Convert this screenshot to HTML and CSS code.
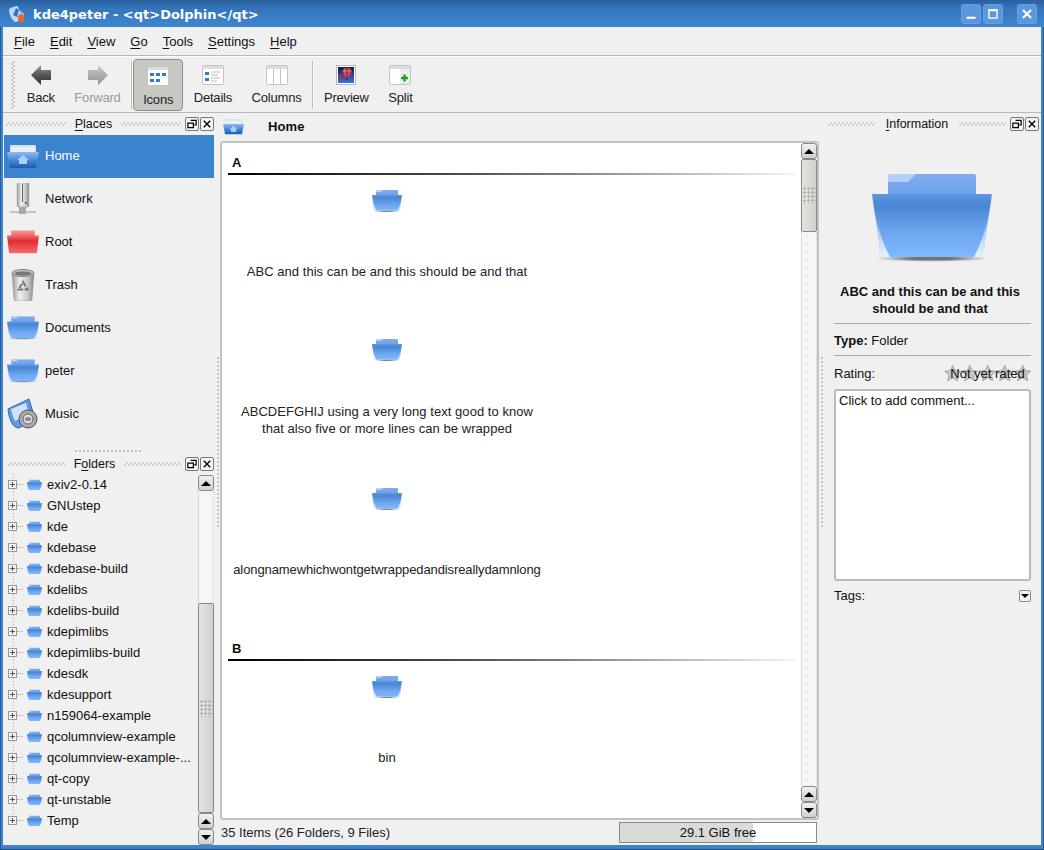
FILE: index.html
```html
<!DOCTYPE html>
<html lang="en">
<head>
<meta charset="utf-8">
<title>kde4peter - Dolphin</title>
<link rel="stylesheet" href="styles.css">
</head>
<body>
<svg class="defs" aria-hidden="true">
  <defs>
    <linearGradient id="fBack" x1="0" y1="0" x2="0" y2="1"><stop offset="0" stop-color="#7fadf0"/><stop offset="1" stop-color="#6a9fe8"/></linearGradient>
    <linearGradient id="fFront" x1="0" y1="0" x2="0" y2="1"><stop offset="0" stop-color="#5f97e0"/><stop offset=".18" stop-color="#4a86d4"/><stop offset=".6" stop-color="#6ca6f0"/><stop offset="1" stop-color="#82b8fc"/></linearGradient>
    <linearGradient id="fGlow" x1="0" y1="0" x2="0" y2="1"><stop offset=".15" stop-color="#fff" stop-opacity="0"/><stop offset="1" stop-color="#fff" stop-opacity=".8"/></linearGradient>
    <radialGradient id="fShadow"><stop offset=".4" stop-color="#555" stop-opacity=".8"/><stop offset="1" stop-color="#888" stop-opacity="0"/></radialGradient>
    <linearGradient id="fRed" x1="0" y1="0" x2="0" y2="1"><stop offset="0" stop-color="#ee6a6e"/><stop offset=".3" stop-color="#e02c30"/><stop offset="1" stop-color="#f86a6c"/></linearGradient>
    <linearGradient id="fRedB" x1="0" y1="0" x2="0" y2="1"><stop offset="0" stop-color="#f79a9a"/><stop offset="1" stop-color="#ee5a5e"/></linearGradient>
    <linearGradient id="fHome" x1="0" y1="0" x2="0" y2="1"><stop offset="0" stop-color="#8fbcf4"/><stop offset=".5" stop-color="#4688d8"/><stop offset="1" stop-color="#1a5cb0"/></linearGradient>
    <linearGradient id="aDark" x1="0" y1="0" x2="0" y2="1"><stop offset="0" stop-color="#999"/><stop offset=".5" stop-color="#555"/><stop offset="1" stop-color="#333"/></linearGradient>
    <linearGradient id="aLight" x1="0" y1="0" x2="0" y2="1"><stop offset="0" stop-color="#ccc"/><stop offset="1" stop-color="#8f8f8f"/></linearGradient>
    <linearGradient id="metal" x1="0" y1="0" x2="1" y2="0"><stop offset="0" stop-color="#999"/><stop offset=".35" stop-color="#eee"/><stop offset=".7" stop-color="#ccc"/><stop offset="1" stop-color="#888"/></linearGradient>
    <linearGradient id="pic" x1="0" y1="0" x2="0" y2="1"><stop offset="0" stop-color="#15154a"/><stop offset="1" stop-color="#3a78d8"/></linearGradient>
    <symbol id="folder" viewBox="0 0 120 88">
      <ellipse cx="60" cy="84.500" rx="58" ry="3.500" fill="url(#fShadow)"/>
      <path d="M16 2a2 2 0 0 1 2-2h84a2 2 0 0 1 2 2v24H16z" fill="url(#fBack)"/>
      <path d="M16 8V2a2 2 0 0 1 2-2h26l-8 8z" fill="#b5d0f8"/>
      <path d="M0 20H120C116 50 112 68 112 83H8C8 68 4 50 0 20Z" fill="url(#fFront)"/>
      <path d="M0 20C4 50 8 68 8 83H18C10 68 3 46 0 20Z" fill="url(#fGlow)"/>
      <path d="M120 20C116 50 112 68 112 83H102C110 68 117 46 120 20Z" fill="url(#fGlow)"/>
    </symbol>
    <symbol id="folder-red" viewBox="0 0 120 88">
      <path d="M16 2a2 2 0 0 1 2-2h84a2 2 0 0 1 2 2v24H16z" fill="url(#fRedB)"/>
      <path d="M0 20H120L112 86H8Z" fill="url(#fRed)"/>
    </symbol>
    <symbol id="tb-frame" viewBox="0 0 22 20">
      <rect x=".5" y=".5" width="21" height="19" rx="1" fill="#fff" stroke="#c4c4c4"/>
      <rect x="1" y="1" width="20" height="3" fill="#ddd"/>
    </symbol>
    <symbol id="star" viewBox="0 0 18 18">
      <path d="M9 1l2.500 5.400 5.800.7-4.300 4 1.200 5.900L9 14.100 3.800 17l1.200-5.900-4.300-4 5.800-.7z" fill="#c6c6c6" stroke="#999" stroke-width=".8"/>
    </symbol>
    <symbol id="ic-float" viewBox="0 0 13 13">
      <path d="M5 2.500h6v5H9M2 5.500h6v5H2zM2 5.500h6" fill="none" stroke="#000" stroke-width="1.300"/>
    </symbol>
    <symbol id="ic-close" viewBox="0 0 13 13">
      <path d="M3 3l7 7M10 3l-7 7" fill="none" stroke="#000" stroke-width="1.500"/>
    </symbol>
  </defs>
</svg>

<div class="window">
  <header class="titlebar">
    <svg class="app-icon" viewBox="0 0 18 18"><path d="M1 4c3-2 6-3 9-3l1 4 5 4-3 7-6 1C3 14 1 9 1 4z" fill="#bcd8f8"/><path d="M8 3l3 2-2 7-4-2z" fill="#2f6fc8"/><path d="M9 12l4-4 4 4h-1v5h-6v-5z" fill="#e06a30"/></svg>
    <span class="title-text">kde4peter - &lt;qt&gt;Dolphin&lt;/qt&gt;</span>
    <div class="win-buttons">
      <button class="win-btn"><svg viewBox="0 0 20 20"><rect x="5" y="13" width="10" height="2.400" fill="#fff"/></svg></button>
      <button class="win-btn"><svg viewBox="0 0 20 20"><rect x="5.500" y="5.500" width="9" height="9" fill="none" stroke="#fff" stroke-width="1.500"/><rect x="5" y="5" width="10" height="2" fill="#fff"/></svg></button>
      <button class="win-btn win-close"><svg viewBox="0 0 20 20"><path d="M5.500 5.500l9 9M14.500 5.500l-9 9" stroke="#fff" stroke-width="2.400"/></svg></button>
    </div>
  </header>

  <nav class="menubar">
    <span><u>F</u>ile</span><span><u>E</u>dit</span><span><u>V</u>iew</span><span><u>G</u>o</span><span><u>T</u>ools</span><span><u>S</u>ettings</span><span><u>H</u>elp</span>
  </nav>

  <div class="toolbar">
    <div class="tb-handle"></div>
    <div class="tb-btn"><svg class="tb-icon" viewBox="0 0 20 20"><path d="M0 10L10 0V5H20V15H10V20Z" fill="url(#aDark)"/></svg><span>Back</span></div>
    <div class="tb-btn tb-disabled"><svg class="tb-icon" viewBox="0 0 20 20"><path d="M20 10L10 0V5H0V15H10V20Z" fill="url(#aLight)"/></svg><span>Forward</span></div>
    <div class="tb-sep"></div>
    <div class="tb-btn tb-active">
      <svg class="tb-icon tb-wide" viewBox="0 0 22 20"><use href="#tb-frame"/><g fill="#2e7bd6"><rect x="3" y="7" width="4" height="3"/><rect x="9" y="7" width="4" height="3"/><rect x="15" y="7" width="4" height="3"/><rect x="3" y="13" width="4" height="3"/><rect x="9" y="13" width="4" height="3"/></g></svg>
      <span>Icons</span>
    </div>
    <div class="tb-btn">
      <svg class="tb-icon tb-wide" viewBox="0 0 22 20"><use href="#tb-frame"/><g fill="#2e7bd6"><rect x="3" y="7" width="4" height="3"/><rect x="3" y="13" width="4" height="3"/></g><path d="M9 7h9M9 10h7M9 13h9M9 16h6" stroke="#bbb"/></svg>
      <span>Details</span>
    </div>
    <div class="tb-btn">
      <svg class="tb-icon tb-wide" viewBox="0 0 22 20"><use href="#tb-frame"/><path d="M7.500 4v15M14.500 4v15" stroke="#c4c4c4"/></svg>
      <span>Columns</span>
    </div>
    <div class="tb-sep"></div>
    <div class="tb-btn">
      <svg class="tb-icon" viewBox="0 0 20 20"><rect x=".5" y=".5" width="19" height="19" fill="#fff" stroke="#bbb"/><rect x="2" y="2" width="16" height="16" fill="url(#pic)"/><circle cx="11" cy="7.500" r="5" fill="#a02868"/><path d="M6.500 6h9M8.500 3.500l1 8M13.500 3.500l-1 8" stroke="#d8a030" stroke-width=".8"/><path d="M3 11l3-3-1 7z" fill="#d02828"/><path d="M10 13h2v2h-2z" fill="#6a3018"/></svg>
      <span>Preview</span>
    </div>
    <div class="tb-btn">
      <svg class="tb-icon tb-wide" viewBox="0 0 22 20"><use href="#tb-frame"/><rect x="11" y="4" width="10" height="15" fill="#e8e8e8"/><path d="M11 8l4-4M11 13l9-9M11 18l10-10M16 18l5-5" stroke="#fff"/><path d="M12 13h7M15.500 9.500v7" stroke="#22a020" stroke-width="2.400"/></svg>
      <span>Split</span>
    </div>
  </div>

  <main class="workspace">
    <aside class="left-dock">
      <div class="dock-head">
        <i class="dots"></i><span class="dock-title"><u>P</u>laces</span><i class="dots"></i>
        <button class="dock-btn"><svg viewBox="0 0 13 13"><use href="#ic-float"/></svg></button><button class="dock-btn"><svg viewBox="0 0 13 13"><use href="#ic-close"/></svg></button>
      </div>
      <ul class="places">
        <li class="place place-on">
          <svg class="place-icon" viewBox="0 0 32 26"><path d="M3 3a1 1 0 0 1 1-1h24a1 1 0 0 1 1 1v8H3z" fill="#cfe0f6"/><rect x="4" y="4" width="24" height="6" fill="#eee"/><path d="M0 9H32L29 25H3Z" fill="url(#fHome)"/><path d="M16 12l6 5h-2v4h-8v-4h-2z" fill="#a9d0f8"/></svg>
          <span>Home</span>
        </li>
        <li class="place">
          <svg class="place-icon" viewBox="0 0 26 32"><rect x="7" y="0" width="12" height="24" rx="1" fill="url(#metal)" stroke="#aaa" stroke-width=".5"/><path d="M12.500 1v18" stroke="#444" stroke-width=".8"/><rect x="15" y="19" width="1.500" height="1.500" fill="#222"/><path d="M0 29h26" stroke="#b4b4b4" stroke-width="1.500"/><rect x="9" y="24" width="7" height="7" fill="#a8a8a8"/></svg>
          <span>Network</span>
        </li>
        <li class="place">
          <svg class="place-icon" viewBox="0 0 30 22"><use href="#folder-red" width="30" height="22"/></svg>
          <span>Root</span>
        </li>
        <li class="place">
          <svg class="place-icon" viewBox="0 0 24 32"><path d="M1 4h22l-2 26a3 2 0 0 1-3 2H6a3 2 0 0 1-3-2Z" fill="url(#metal)" stroke="#888" stroke-width=".5"/><ellipse cx="12" cy="4" rx="11" ry="3.500" fill="#bbb" stroke="#888"/><ellipse cx="12" cy="4.500" rx="8.500" ry="2" fill="#777"/><path d="M12 13l4.500 7.500h-9z" fill="none" stroke="#777" stroke-width="2" stroke-dasharray="5 1.500"/></svg>
          <span>Trash</span>
        </li>
        <li class="place">
          <svg class="place-icon" viewBox="0 0 30 22"><use href="#folder" width="30" height="22"/></svg>
          <span>Documents</span>
        </li>
        <li class="place">
          <svg class="place-icon" viewBox="0 0 30 22"><use href="#folder" width="30" height="22"/></svg>
          <span>peter</span>
        </li>
        <li class="place">
          <svg class="place-icon" viewBox="0 0 32 32"><path d="M1 11L22 1l6 20-16 9C6 30 2 22 1 11Z" fill="#5c9be8" stroke="#2a64b8"/><path d="M4 11l15-6 3 11-14 7C6 19 5 15 4 11Z" fill="#cfe2fa"/><circle cx="21" cy="21" r="9" fill="#aaa" stroke="#555"/><circle cx="21" cy="21" r="5" fill="#ddd" stroke="#666"/><ellipse cx="21" cy="21" rx="3" ry="2" fill="#888"/></svg>
          <span>Music</span>
        </li>
      </ul>
      <div class="dock-split"><i class="split-dots"></i></div>
      <div class="dock-head dock-head-folders">
        <i class="dots"></i><span class="dock-title">F<u>o</u>lders</span><i class="dots"></i>
        <button class="dock-btn"><svg viewBox="0 0 13 13"><use href="#ic-float"/></svg></button><button class="dock-btn"><svg viewBox="0 0 13 13"><use href="#ic-close"/></svg></button>
      </div>
      <div class="tree-wrap">
        <ul class="tree">
          <li><i class="exp"></i><i class="conn"></i><svg class="tree-folder" viewBox="0 0 30 22"><use href="#folder" width="30" height="22"/></svg><span>exiv2-0.14</span></li>
          <li><i class="exp"></i><i class="conn"></i><svg class="tree-folder" viewBox="0 0 30 22"><use href="#folder" width="30" height="22"/></svg><span>GNUstep</span></li>
          <li><i class="exp"></i><i class="conn"></i><svg class="tree-folder" viewBox="0 0 30 22"><use href="#folder" width="30" height="22"/></svg><span>kde</span></li>
          <li><i class="exp"></i><i class="conn"></i><svg class="tree-folder" viewBox="0 0 30 22"><use href="#folder" width="30" height="22"/></svg><span>kdebase</span></li>
          <li><i class="exp"></i><i class="conn"></i><svg class="tree-folder" viewBox="0 0 30 22"><use href="#folder" width="30" height="22"/></svg><span>kdebase-build</span></li>
          <li><i class="exp"></i><i class="conn"></i><svg class="tree-folder" viewBox="0 0 30 22"><use href="#folder" width="30" height="22"/></svg><span>kdelibs</span></li>
          <li><i class="exp"></i><i class="conn"></i><svg class="tree-folder" viewBox="0 0 30 22"><use href="#folder" width="30" height="22"/></svg><span>kdelibs-build</span></li>
          <li><i class="exp"></i><i class="conn"></i><svg class="tree-folder" viewBox="0 0 30 22"><use href="#folder" width="30" height="22"/></svg><span>kdepimlibs</span></li>
          <li><i class="exp"></i><i class="conn"></i><svg class="tree-folder" viewBox="0 0 30 22"><use href="#folder" width="30" height="22"/></svg><span>kdepimlibs-build</span></li>
          <li><i class="exp"></i><i class="conn"></i><svg class="tree-folder" viewBox="0 0 30 22"><use href="#folder" width="30" height="22"/></svg><span>kdesdk</span></li>
          <li><i class="exp"></i><i class="conn"></i><svg class="tree-folder" viewBox="0 0 30 22"><use href="#folder" width="30" height="22"/></svg><span>kdesupport</span></li>
          <li><i class="exp"></i><i class="conn"></i><svg class="tree-folder" viewBox="0 0 30 22"><use href="#folder" width="30" height="22"/></svg><span>n159064-example</span></li>
          <li><i class="exp"></i><i class="conn"></i><svg class="tree-folder" viewBox="0 0 30 22"><use href="#folder" width="30" height="22"/></svg><span>qcolumnview-example</span></li>
          <li><i class="exp"></i><i class="conn"></i><svg class="tree-folder" viewBox="0 0 30 22"><use href="#folder" width="30" height="22"/></svg><span>qcolumnview-example-...</span></li>
          <li><i class="exp"></i><i class="conn"></i><svg class="tree-folder" viewBox="0 0 30 22"><use href="#folder" width="30" height="22"/></svg><span>qt-copy</span></li>
          <li><i class="exp"></i><i class="conn"></i><svg class="tree-folder" viewBox="0 0 30 22"><use href="#folder" width="30" height="22"/></svg><span>qt-unstable</span></li>
          <li><i class="exp"></i><i class="conn"></i><svg class="tree-folder" viewBox="0 0 30 22"><use href="#folder" width="30" height="22"/></svg><span>Temp</span></li>
        </ul>
        <div class="scrollbar tree-scroll">
          <div class="sb-btn"><i class="tri-up"></i></div>
          <div class="sb-track sb-track-tree"></div>
          <div class="sb-thumb sb-thumb-tree"><i class="grip"></i></div>
          <div class="sb-btn sb-btn-small"><i class="tri-up"></i></div>
          <div class="sb-btn sb-btn-small"><i class="tri-down"></i></div>
        </div>
      </div>
    </aside>

    <div class="v-split"><i class="v-dots"></i></div>

    <section class="center">
      <div class="location">
        <svg class="loc-icon" viewBox="0 0 32 26"><path d="M3 3a1 1 0 0 1 1-1h24a1 1 0 0 1 1 1v8H3z" fill="#cfe0f6"/><rect x="4" y="4" width="24" height="6" fill="#eee"/><path d="M0 9H32L29 25H3Z" fill="url(#fHome)"/><path d="M16 12l6 5h-2v4h-8v-4h-2z" fill="#a9d0f8"/></svg>
        <strong>Home</strong>
      </div>
      <div class="view">
        <div class="files">
          <h2 class="cat">A</h2>
          <div class="item"><svg class="item-icon" viewBox="0 0 30 22"><use href="#folder" width="30" height="22"/></svg><div class="item-label">ABC and this can be and this should be and that</div></div>
          <div class="item"><svg class="item-icon" viewBox="0 0 30 22"><use href="#folder" width="30" height="22"/></svg><div class="item-label">ABCDEFGHIJ using a very long text good to know<br>that also five or more lines can be wrapped</div></div>
          <div class="item"><svg class="item-icon" viewBox="0 0 30 22"><use href="#folder" width="30" height="22"/></svg><div class="item-label item-label-long">alongnamewhichwontgetwrappedandisreallydamnlong</div></div>
          <h2 class="cat cat-next">B</h2>
          <div class="item"><svg class="item-icon" viewBox="0 0 30 22"><use href="#folder" width="30" height="22"/></svg><div class="item-label">bin</div></div>
        </div>
        <div class="scrollbar view-scroll">
          <div class="sb-btn"><i class="tri-up"></i></div>
          <div class="sb-thumb sb-thumb-view"><i class="grip"></i></div>
          <div class="sb-track"></div>
          <div class="sb-btn"><i class="tri-up"></i></div>
          <div class="sb-btn"><i class="tri-down"></i></div>
        </div>
      </div>
      <footer class="status">
        <span class="status-text">35 Items (26 Folders, 9 Files)</span>
        <div class="capacity"><div class="capacity-fill" style="width:68%"></div><span>29.1 GiB free</span></div>
      </footer>
    </section>

    <div class="v-split v-split-right"><i class="v-dots"></i></div>

    <aside class="right-dock">
      <div class="dock-head dock-head-info">
        <i class="dots"></i><span class="dock-title"><u>I</u>nformation</span><i class="dots"></i>
        <button class="dock-btn"><svg viewBox="0 0 13 13"><use href="#ic-float"/></svg></button><button class="dock-btn"><svg viewBox="0 0 13 13"><use href="#ic-close"/></svg></button>
      </div>
      <div class="info">
        <svg class="info-folder" viewBox="0 0 120 88"><use href="#folder" width="120" height="88"/></svg>
        <div class="info-name">ABC and this can be and this<br>should be and that</div>
        <div class="info-type"><b>Type:</b> Folder</div>
        <div class="info-rating">
          <span>Rating:</span>
          <div class="rating-box">
            <div class="stars"><svg viewBox="0 0 18 18"><use href="#star"/></svg><svg viewBox="0 0 18 18"><use href="#star"/></svg><svg viewBox="0 0 18 18"><use href="#star"/></svg><svg viewBox="0 0 18 18"><use href="#star"/></svg><svg viewBox="0 0 18 18"><use href="#star"/></svg></div>
            <span class="rating-text">Not yet rated</span>
          </div>
        </div>
        <div class="comment">Click to add comment...</div>
        <div class="tags"><span>Tags:</span><button class="tags-btn"><i class="tri-down tri-small"></i></button></div>
      </div>
    </aside>
  </main>
</div>
</body>
</html>
```

FILE: styles.css
```css
* { box-sizing: border-box; }
html, body { margin: 0; padding: 0; }
body { width: 1044px; height: 850px; overflow: hidden; background: #2a6aa8; font: 13px/17px "Liberation Sans", Arial, sans-serif; color: #111; }
ul { list-style: none; margin: 0; padding: 0; }
u { text-underline-offset: 2px; text-decoration-thickness: 1px; }
i { display: block; font-style: normal; }
button { padding: 0; font: inherit; }
.defs { display: block; width: 0; height: 0; overflow: hidden; }

.window { width: 1044px; height: 850px; display: flex; flex-direction: column; padding: 0 3px 4px; background: #3c84d0; border-bottom: 1px solid #1c4a78; box-shadow: inset 1px 0 #2a5c94, inset -1px 0 #2a5c94; }

.titlebar { flex: none; height: 27px; margin: 0 -3px; padding: 1px 7px 0 8px; display: flex; align-items: center; background: linear-gradient(#2a5f9c 0, #3474ba 8px, #3f86d2 100%); color: #fff; }
.app-icon { width: 18px; height: 18px; flex: none; }
.title-text { margin-left: 7px; font-family: "DejaVu Sans", sans-serif; font-weight: 700; font-size: 13px; white-space: nowrap; }
.win-buttons { margin-left: auto; display: flex; gap: 2px; }
.win-btn { width: 20px; height: 20px; border: 1px solid #6aa0dc; border-radius: 3px; background: #5b97dc; display: flex; }
.win-btn svg { width: 18px; height: 18px; }
.win-close { margin-left: 12px; }

.menubar { flex: none; height: 29px; padding: 1px 0 0 11px; display: flex; align-items: center; gap: 15px; background: #f0f0f0; border-bottom: 1px solid #b8b8b8; }

.toolbar { flex: none; height: 57px; display: flex; align-items: stretch; padding: 2px 0 1px 8px; background: #f0f0f0; border-top: 1px solid #fff; border-bottom: 1px solid #b8b8b8; }
.tb-handle { width: 4px; margin: 2px 2px 2px 0; background: conic-gradient(#c8c8c8 25%, transparent 0 50%, #c8c8c8 0 75%, transparent 0) 0 0 / 4px 4px; }
.tb-btn { display: flex; flex-direction: column; align-items: center; padding: 6px 9.750px 0; color: #222; }
.tb-btn span { margin-top: 4px; line-height: 17px; white-space: nowrap; letter-spacing: -.2px; }
.tb-icon { width: 20px; height: 20px; flex: none; }
.tb-wide { width: 22px; }
.tb-disabled { color: #9c9c9c; }
.tb-sep { width: 1px; margin: 2px 1px 2px 1px; background: #bdbdbd; box-shadow: 1px 0 #fff; }
.tb-active { background: #c6c8c2; border: 1px solid #8f8f8f; border-radius: 4px; padding: 6px 8.750px 0; margin-right: 1px; }
.tb-active span { margin-top: 5px; }

.workspace { flex: 1; min-height: 0; display: flex; background: #f0f0f0; }

.left-dock { width: 212px; flex: none; display: flex; flex-direction: column; }
.dock-head { flex: none; height: 22px; display: flex; align-items: center; padding: 0 1px 0 3px; }
.dots { flex: 1; height: 4px; background: conic-gradient(#d0d0d0 25%, transparent 0 50%, #d0d0d0 0 75%, transparent 0) 0 0 / 4px 4px; }
.dock-title { margin: 0 9px; white-space: nowrap; font-size: 12.500px; }
.dock-btn { flex: none; width: 14px; height: 14px; margin-left: 1px; border: 1px solid #777; border-radius: 2px; background: #f4f4f4; display: flex; }
.dock-btn svg { width: 12px; height: 12px; }
.dock-btn:first-of-type { margin-left: 4px; }

.places { flex: none; }
.place { height: 43px; margin: 0 1px; padding-bottom: 2px; display: flex; align-items: center; }
.place span { margin-left: 6px; }
.place-on { background: #3b82cf; color: #fff; }
.place-icon { width: 32px; height: 32px; margin-left: 3px; flex: none; }

.dock-split { flex: none; height: 19px; padding-top: 14px; display: flex; justify-content: center; }
.split-dots { width: 68px; height: 2px; background: repeating-linear-gradient(90deg, #c0c0c0 0 2px, transparent 2px 4px); }

.dock-head-folders { height: 18px; padding-left: 5px; }

.tree-wrap { flex: 1; min-height: 0; display: flex; padding-top: 1px; }
.tree { flex: 1; min-width: 0; overflow: hidden; background: repeating-linear-gradient(#b4b4b4 0 1px, transparent 1px 3px) 9.500px 0 / 1px 347px no-repeat; }
.tree li { height: 21px; display: flex; align-items: center; padding-left: 5px; white-space: nowrap; }
.exp { width: 9px; height: 9px; flex: none; border: 1px solid #999; background: linear-gradient(#555, #555) center / 5px 1px no-repeat, linear-gradient(#555, #555) center / 1px 5px no-repeat, #f4f4f4; }
.conn { width: 6px; flex: none; border-top: 1px dotted #aaa; }
.tree-folder { width: 15px; height: 12px; margin-left: 4px; flex: none; }
.tree li span { margin-left: 5px; }

.scrollbar { flex: none; width: 16px; display: flex; flex-direction: column; }
.tree-scroll { margin: 1px 1px 1px 2px; }
.sb-btn { flex: none; height: 16px; border: 1px solid #888; border-radius: 3px; background: linear-gradient(#f2f2ee, #cfd1cb); display: flex; align-items: center; justify-content: center; }
.sb-btn-small { height: 16px; }
.sb-track { flex: 1; border-left: 1px dotted #ccc; border-right: 1px dotted #ccc; background: conic-gradient(#ececec 25%, #fff 0 50%, #ececec 0 75%, #fff 0) 0 0 / 2px 2px; }
.sb-track-tree { flex: none; height: 112px; }
.sb-thumb { flex: none; border: 1px solid #888; border-radius: 2px; background: linear-gradient(90deg, #e4e5e0, #cfd1cb); display: flex; align-items: center; justify-content: center; }
.sb-thumb-tree { height: 210px; }
.sb-thumb-view { height: 73px; }
.grip { width: 13px; height: 17px; background: radial-gradient(circle at 1.500px 1.500px, #b0b0b0 1.200px, transparent 1.400px) 0 0 / 4px 4px; }
.tri-up { width: 0; height: 0; border: 5px solid transparent; border-top: 0; border-bottom-color: #000; }
.tri-down { width: 0; height: 0; border: 5px solid transparent; border-bottom: 0; border-top-color: #000; }
.tri-small { border-width: 4px; border-bottom-width: 0; }

.v-split { flex: none; width: 5px; padding: 244px 0 0 2px; }
.v-split-right { width: 8px; padding-left: 2px; }
.v-dots { width: 2px; height: 170px; background: repeating-linear-gradient(#c4c4c4 0 2px, transparent 2px 4px); }

.center { flex: 1; min-width: 0; display: flex; flex-direction: column; }
.location { flex: none; height: 28px; display: flex; align-items: center; padding: 0 0 1px 3px; }
.loc-icon { width: 21px; height: 17px; flex: none; }
.location strong { margin-left: 24px; font-size: 13px; letter-spacing: .1px; }
.view { flex: 1; min-height: 0; display: flex; background: #fff; border: 2px solid #c2c2c2; border-radius: 3px; }
.files { flex: 1; min-width: 0; padding: 0 6px 0 6px; overflow: hidden; }
.cat { margin: 0; height: 32px; padding-top: 11px; padding-left: 4px; font-size: 13px; line-height: 17px; font-weight: 700; background: linear-gradient(90deg, #000 0, #555 45%, #f4f4f4 100%) left bottom / 100% 2px no-repeat; }
.cat-next { height: 39px; padding-top: 18px; }
.item { width: 318px; height: 149px; padding-top: 15px; display: flex; flex-direction: column; align-items: center; }
.item-icon { width: 30px; height: 24px; flex: none; margin-top: -1px; margin-bottom: 1px; }
.item-label { margin-top: 33px; height: 48px; display: flex; align-items: center; text-align: center; white-space: nowrap; color: #222; letter-spacing: .05px; }
.item-label-long { letter-spacing: -.1px; }

.status { flex: none; height: 25px; display: flex; align-items: center; padding-right: 2px; }
.status-text { margin: 0 0 1px 1px; color: #222; }
.capacity { margin-left: auto; width: 198px; height: 21px; border: 1px solid #888; background: #fff; position: relative; display: flex; align-items: center; justify-content: center; }
.capacity-fill { position: absolute; left: 0; top: 0; bottom: 0; background: #d9dbd7; }
.capacity span { position: relative; }

.right-dock { width: 214px; flex: none; display: flex; flex-direction: column; }
.dock-head-info { padding: 0 2px 0 1px; }
.dock-head-info .dock-title { margin: 0 11px; }
.info { flex: 1; padding: 0 10px 0 7px; display: flex; flex-direction: column; }
.info-folder { flex: none; width: 120px; height: 88px; margin: 39px 0 0 38px; }
.info-name { margin-top: 21px; padding: 0 5px 6px 0; text-align: center; font-weight: 700; line-height: 17px; border-bottom: 1px solid #aaa; white-space: nowrap; }
.info-type { padding: 8px 0 6px; border-bottom: 1px solid #aaa; }
.info-rating { display: flex; justify-content: space-between; align-items: center; height: 33px; padding-top: 1px; }
.rating-box { position: relative; width: 87px; height: 18px; display: flex; align-items: center; justify-content: center; }
.stars { position: absolute; inset: 0; display: flex; justify-content: space-between; }
.stars svg { width: 17.400px; height: 18px; }
.rating-text { position: relative; white-space: nowrap; }
.comment { flex: none; height: 192px; padding: 1px 3px; background: #fff; border: 2px solid #bbb; border-radius: 3px; }
.tags { display: flex; justify-content: space-between; align-items: center; height: 29px; }
.tags-btn { width: 12px; height: 12px; border: 1px solid #888; border-radius: 2px; background: #f4f4f4; display: flex; align-items: center; justify-content: center; }
```
